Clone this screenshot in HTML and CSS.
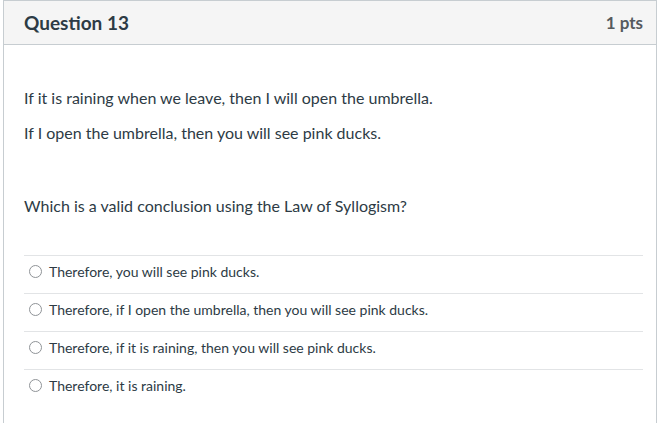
FILE: index.html
```html
<!DOCTYPE html>
<html>
<head>
<meta charset="utf-8">
<link rel="stylesheet" href="styles.css">
</head>
<body>
<div class="card">
  <div class="header">
    <span class="title">Question 13</span>
    <span class="pts">1 pts</span>
  </div>
  <div class="content">
    <p class="para">If it is raining when we leave, then I will open the umbrella.</p>
    <p class="para">If I open the umbrella, then you will see pink ducks.</p>
    <p class="para question">Which is a valid conclusion using the Law of Syllogism?</p>
    <div class="answers">
      <label class="answer"><span class="radio"></span>Therefore, you will see pink ducks.</label>
      <label class="answer"><span class="radio"></span>Therefore, if I open the umbrella, then you will see pink ducks.</label>
      <label class="answer"><span class="radio"></span>Therefore, if it is raining, then you will see pink ducks.</label>
      <label class="answer"><span class="radio"></span>Therefore, it is raining.</label>
    </div>
  </div>
</div>
</body>
</html>
```
FILE: styles.css
```css
html, body {
  margin: 0;
  padding: 0;
  background: #ffffff;
}
body {
  font-family: Lato, "Open Sans", sans-serif;
  color: #2d3b45;
}
.card {
  margin-left: 3px;
  width: 654px;
  height: 440px;
  border: 1px solid #c7cdd1;
  box-sizing: border-box;
}
.header {
  height: 43px;
  background: #f5f5f5;
  border-bottom: 1px solid #c7cdd1;
  display: flex;
  align-items: center;
  justify-content: space-between;
  padding: 0 13px 0 20px;
}
.title {
  font-size: 19px;
  font-weight: 700;
}
.pts {
  font-size: 17px;
  font-weight: 700;
  color: #555a5e;
}
.content {
  padding: 42px 13px 0 20px;
}
.para {
  margin: 0 0 13px;
  font-size: 16px;
  line-height: 22px;
}
.question {
  margin-top: 51px;
  margin-bottom: 38px;
}
.answers {
  display: flex;
  flex-direction: column;
}
.answer {
  display: flex;
  align-items: center;
  height: 38px;
  box-sizing: border-box;
  border-top: 1px solid #e2e4e6;
  padding-left: 5px;
  padding-bottom: 6px;
  font-size: 14px;
}
.radio {
  width: 13px;
  height: 13px;
  box-sizing: border-box;
  border: 1px solid #8f9397;
  border-radius: 50%;
  margin-right: 7px;
  background: #fff;
}
```
